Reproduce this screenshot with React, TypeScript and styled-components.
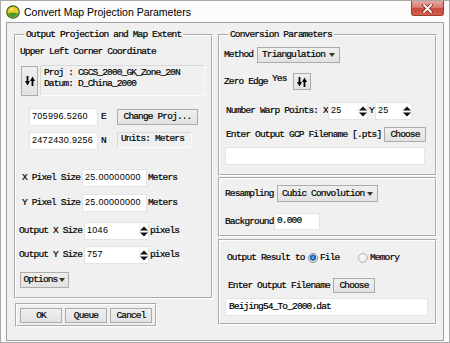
import React from "react";
import styled, { createGlobalStyle } from "styled-components";

const MONO = `"Liberation Mono", "DejaVu Sans Mono", monospace`;
const SANS = `"Liberation Sans", Arial, sans-serif`;
const MONO_SIZE = "9.5px";
const MONO_SPACING = "-0.85px";

const GlobalStyle = createGlobalStyle`
  html, body { margin: 0; padding: 0; background: #ffffff; }
  *, *::before, *::after { box-sizing: border-box; }
`;

const Window = styled.div`
  width: 450px;
  height: 343px;
  border: 1px solid #a9a9a9;
  background: #fbfbfb;
  display: flex;
  flex-direction: column;
  font-family: ${MONO};
  font-size: ${MONO_SIZE};
  letter-spacing: ${MONO_SPACING};
  -webkit-text-stroke: 0.2px #000;
  color: #000;
  overflow: hidden;
`;

const TitleBar = styled.div`
  height: 21px;
  flex-shrink: 0;
  display: flex;
  align-items: center;
  padding-left: 5px;
  -webkit-text-stroke: 0;
`;

const TitleText = styled.span`
  font-family: ${SANS};
  font-size: 10.5px;
  letter-spacing: 0;
  margin-left: 4px;
  color: #000;
`;

const CloseButton = styled.div`
  margin-left: auto;
  margin-right: 5px;
  align-self: flex-start;
  width: 33px;
  height: 15px;
  border: 1px solid #9a3d33;
  border-top: none;
  border-radius: 0 0 3px 3px;
  background: linear-gradient(#e9a79e 0%, #dc7e72 45%, #c8473a 55%, #d4604f 100%);
  display: flex;
  align-items: center;
  justify-content: center;
`;

const Client = styled.div`
  flex: 1;
  margin: 0 5px 1px 5px;
  border: 1px solid #a0a0a0;
  background: #f0f0f0;
  display: flex;
  gap: 5px;
  padding: 6px 6px 0 7px;
`;

const Column = styled.div<{ $w: number }>`
  width: ${(p) => p.$w}px;
  flex-shrink: 0;
  display: flex;
  flex-direction: column;
`;

const Group = styled.fieldset<{ $pad: string }>`
  margin: 0;
  border: 2px groove #ffffff;
  padding: ${(p) => p.$pad};
  min-width: 0;
`;

const Legend = styled.legend`
  padding: 0 2px;
  margin-left: 4px;
  height: 12px;
  line-height: 12px;
  white-space: nowrap;
`;

const Box = styled.div<{ $pad: string; $mt: number }>`
  border: 2px groove #ffffff;
  padding: ${(p) => p.$pad};
  margin-top: ${(p) => p.$mt}px;
`;

const ButtonBox = styled.div`
  align-self: flex-start;
  margin: 4px 0 0 1px;
  width: 142px;
  height: 24px;
  border: 2px groove #ffffff;
  padding: 3px;
  display: flex;
  gap: 3px;
`;

const Row = styled.div<{ $mt?: number; $h: number; $ml?: number; $top?: boolean }>`
  display: flex;
  align-items: ${(p) => (p.$top ? "flex-start" : "center")};
  height: ${(p) => p.$h}px;
  margin-top: ${(p) => p.$mt ?? 0}px;
  margin-left: ${(p) => p.$ml ?? 0}px;
  white-space: nowrap;
`;

const Label = styled.span<{ $w?: number; $ml?: number; $top?: boolean }>`
  display: inline-block;
  flex-shrink: 0;
  width: ${(p) => (p.$w ? `${p.$w}px` : "auto")};
  margin-left: ${(p) => p.$ml ?? 0}px;
  align-self: ${(p) => (p.$top ? "flex-start" : "auto")};
  line-height: 12px;
`;

const Field = styled.div<{ $w: number; $h?: number; $mono?: boolean; $ml?: number }>`
  flex-shrink: 0;
  width: ${(p) => p.$w}px;
  height: ${(p) => p.$h ?? 18}px;
  margin-left: ${(p) => p.$ml ?? 0}px;
  background: #ffffff;
  border: 1px solid #e4e4e4;
  font-family: ${(p) => (p.$mono ? MONO : SANS)};
  font-size: ${(p) => (p.$mono ? MONO_SIZE : "9px")};
  letter-spacing: ${(p) => (p.$mono ? MONO_SPACING : "0.3px")};
  -webkit-text-stroke: ${(p) => (p.$mono ? "0.2px #000" : "0")};
  padding: 1px 0 0 2px;
  line-height: 12px;
  display: flex;
  align-items: flex-start;
`;

const FieldText = styled.span`
  flex: 1;
`;

const Spinner = styled.span`
  width: 9px;
  align-self: stretch;
  margin-top: -1px;
  display: flex;
  align-items: center;
  justify-content: center;
  border-left: 1px solid #f0f0f0;
`;

const Button = styled.div<{ $w: number; $h?: number; $ml?: number; $between?: boolean }>`
  flex-shrink: 0;
  width: ${(p) => p.$w}px;
  height: ${(p) => p.$h ?? 15}px;
  margin-left: ${(p) => p.$ml ?? 0}px;
  border: 1px solid #acacac;
  background: linear-gradient(#efefef, #e2e2e2);
  display: flex;
  align-items: center;
  justify-content: ${(p) => (p.$between ? "space-between" : "center")};
  padding: ${(p) => (p.$between ? "0 4px 0 4px" : "0")};
  line-height: 12px;
  gap: 2px;
`;

const InfoBox = styled.div<{ $w: number; $h: number; $pad: string }>`
  flex-shrink: 0;
  width: ${(p) => p.$w}px;
  height: ${(p) => p.$h}px;
  border: 1px solid #d9d9d9;
  border-right-color: #fbfbfb;
  border-bottom-color: #fbfbfb;
  background: #f0f0f0;
  padding: ${(p) => p.$pad};
  line-height: 10.5px;
`;

const Radio = styled.span<{ $on?: boolean }>`
  flex-shrink: 0;
  width: 10px;
  height: 10px;
  border-radius: 50%;
  border: 1px solid ${(p) => (p.$on ? "#80909e" : "#b9b9b9")};
  background: ${(p) =>
    p.$on
      ? "radial-gradient(circle at 50% 45%, #8ccaf7 0, #2a7bd2 1.5px, #1c55a3 2.8px, #dde5ee 3.4px, #f4f6f8 100%)"
      : "radial-gradient(circle at 40% 40%, #ffffff, #dadada)"};
`;

const Globe = () => (
  <svg width="14" height="14" viewBox="0 0 14 14">
    <circle cx="7" cy="7" r="6.2" fill="#f4cb2a" stroke="#2f6b25" strokeWidth="1.3" />
    <path d="M2.2 8.5 C3.5 7.2 5 8.4 6.5 7.6 C8 6.8 9.5 8.6 11.8 7.9 C11.4 10.6 9.4 12.3 7 12.3 C4.6 12.3 2.8 10.7 2.2 8.5 Z" fill="#4d9a2e" />
    <path d="M4 4.2 C5 3.2 6.6 3.3 7.4 4.2 C6.6 5 5.2 5.2 4 4.2 Z" fill="#fff6c8" />
  </svg>
);

const CloseX = () => (
  <svg width="11" height="9" viewBox="0 0 11 9">
    <path d="M2 1 L9 8 M9 1 L2 8" stroke="#7d2a22" strokeWidth="3.4" strokeLinecap="square" />
    <path d="M2 1 L9 8 M9 1 L2 8" stroke="#ffffff" strokeWidth="1.8" strokeLinecap="square" />
  </svg>
);

const SwapIcon = () => (
  <svg width="10" height="10" viewBox="0 0 10 10">
    <path d="M1.6 0 H3.4 V5 H5 L2.5 9.6 L0 5 H1.6 Z" fill="#000" />
    <path d="M6.6 10 H8.4 V5 H10 L7.5 0.4 L5 5 H6.6 Z" fill="#000" />
  </svg>
);

const SpinIcon = () => (
  <svg width="8" height="11" viewBox="0 0 8 11">
    <path d="M0 4.6 L4 0.6 L8 4.6 Z M0 6.4 L8 6.4 L4 10.4 Z" fill="#111" />
  </svg>
);

const DropArrow = () => (
  <svg width="6" height="4" viewBox="0 0 6 4">
    <path d="M0 0 H6 L3 4 Z" fill="#333" />
  </svg>
);

const SpinField: React.FC<{ value: string; w: number; ml?: number }> = ({ value, w, ml }) => (
  <Field $w={w} $ml={ml}>
    <FieldText>{value}</FieldText>
    <Spinner>
      <SpinIcon />
    </Spinner>
  </Field>
);

export default function App() {
  return (
    <>
      <GlobalStyle />
      <Window>
        <TitleBar>
          <Globe />
          <TitleText>Convert Map Projection Parameters</TitleText>
          <CloseButton>
            <CloseX />
          </CloseButton>
        </TitleBar>
        <Client>
          <Column $w={199}>
            <Group $pad="5px 4px 9px 4px">
              <Legend>Output Projection and Map Extent</Legend>
              <Row $h={12}>
                <Label>Upper Left Corner Coordinate</Label>
              </Row>
              <Row $h={31} $mt={8} $ml={1} $top>
                <Button $w={17} $h={30}>
                  <SwapIcon />
                </Button>
                <InfoBox $w={165} $h={31} $pad="2px 0 0 3px" style={{ marginLeft: 2, marginTop: -1 }}>
                  Proj : CGCS_2000_GK_Zone_20N
                  <br />
                  Datum: D_China_2000
                </InfoBox>
              </Row>
              <Row $h={18} $mt={11}>
                <Field $w={69} $ml={9}>
                  705996.5260
                </Field>
                <Label $w={19} $ml={0} style={{ paddingLeft: 3 }}>
                  E
                </Label>
                <Button $w={81} $h={16}>
                  Change Proj...
                </Button>
              </Row>
              <Row $h={18} $mt={6} $top>
                <Field $w={69} $ml={9}>
                  2472430.9256
                </Field>
                <Label $w={19} style={{ paddingLeft: 3, alignSelf: "center" }}>
                  N
                </Label>
                <InfoBox $w={75} $h={16} $pad="1px 0 0 3px">
                  Units: Meters
                </InfoBox>
              </Row>
              <Row $h={18} $mt={19}>
                <Label $w={60} $ml={2}>
                  X Pixel Size
                </Label>
                <Field $w={65}>25.00000000</Field>
                <Label $ml={1}>Meters</Label>
              </Row>
              <Row $h={18} $mt={7}>
                <Label $w={60} $ml={2}>
                  Y Pixel Size
                </Label>
                <Field $w={65}>25.00000000</Field>
                <Label $ml={1}>Meters</Label>
              </Row>
              <Row $h={18} $mt={10}>
                <Label $w={65} $ml={-1}>
                  Output X Size
                </Label>
                <SpinField value="1046" w={65} />
                <Label $ml={1}>pixels</Label>
              </Row>
              <Row $h={18} $mt={6}>
                <Label $w={65} $ml={-1}>
                  Output Y Size
                </Label>
                <SpinField value="757" w={65} />
                <Label $ml={1}>pixels</Label>
              </Row>
              <Row $h={16} $mt={8}>
                <Button $w={49} $h={16}>
                  Options
                  <DropArrow />
                </Button>
              </Row>
            </Group>
            <ButtonBox>
              <Button $w={42}>OK</Button>
              <Button $w={42}>Queue</Button>
              <Button $w={42}>Cancel</Button>
            </ButtonBox>
          </Column>

          <Column $w={219}>
            <Group $pad="6px 8px 9px 4px">
              <Legend>Conversion Parameters</Legend>
              <Row $h={16}>
                <Label $w={33}>Method</Label>
                <Button $w={83} $h={16} $between>
                  Triangulation
                  <DropArrow />
                </Button>
              </Row>
              <Row $h={17} $mt={10}>
                <Label $w={46}>Zero Edge</Label>
                <Label $w={23} $top style={{ paddingLeft: 2, lineHeight: "11px" }}>
                  Yes
                </Label>
                <Button $w={18} $h={17}>
                  <SwapIcon />
                </Button>
              </Row>
              <Row $h={18} $mt={12}>
                <Label $w={102} $ml={2}>
                  Number Warp Points: X
                </Label>
                <SpinField value="25" w={40} />
                <Label $w={7} style={{ paddingLeft: 1 }}>
                  Y
                </Label>
                <SpinField value="25" w={37} />
              </Row>
              <Row $h={15} $mt={7}>
                <Label $w={158} $ml={2}>
                  Enter Output GCP Filename [.pts]
                </Label>
                <Button $w={42}>Choose</Button>
              </Row>
              <Row $h={18} $mt={5}>
                <Field $w={200} $ml={1} />
              </Row>
            </Group>

            <Box $pad="6px 8px 5px 5px" $mt={1}>
              <Row $h={17}>
                <Label $w={52}>Resampling</Label>
                <Button $w={101} $h={17} $between>
                  Cubic Convolution
                  <DropArrow />
                </Button>
              </Row>
              <Row $h={17} $mt={11}>
                <Label $w={49}>Background</Label>
                <Field $w={46} $h={17} $mono>
                  0.000
                </Field>
              </Row>
            </Box>

            <Box $pad="10px 6px 7px 5px" $mt={2}>
              <Row $h={14}>
                <Label $w={81} $ml={2}>
                  Output Result to
                </Label>
                <Radio $on />
                <Label $w={38} $ml={2}>
                  File
                </Label>
                <Radio />
                <Label $ml={2}>Memory</Label>
              </Row>
              <Row $h={15} $mt={13}>
                <Label $w={105} $ml={3}>
                  Enter Output Filename
                </Label>
                <Button $w={42}>Choose</Button>
              </Row>
              <Row $h={18} $mt={5}>
                <Field $w={203} $mono style={{ paddingLeft: 3, paddingTop: 2 }}>
                  Beijing54_To_2000.dat
                </Field>
              </Row>
            </Box>
          </Column>
        </Client>
      </Window>
    </>
  );
}
